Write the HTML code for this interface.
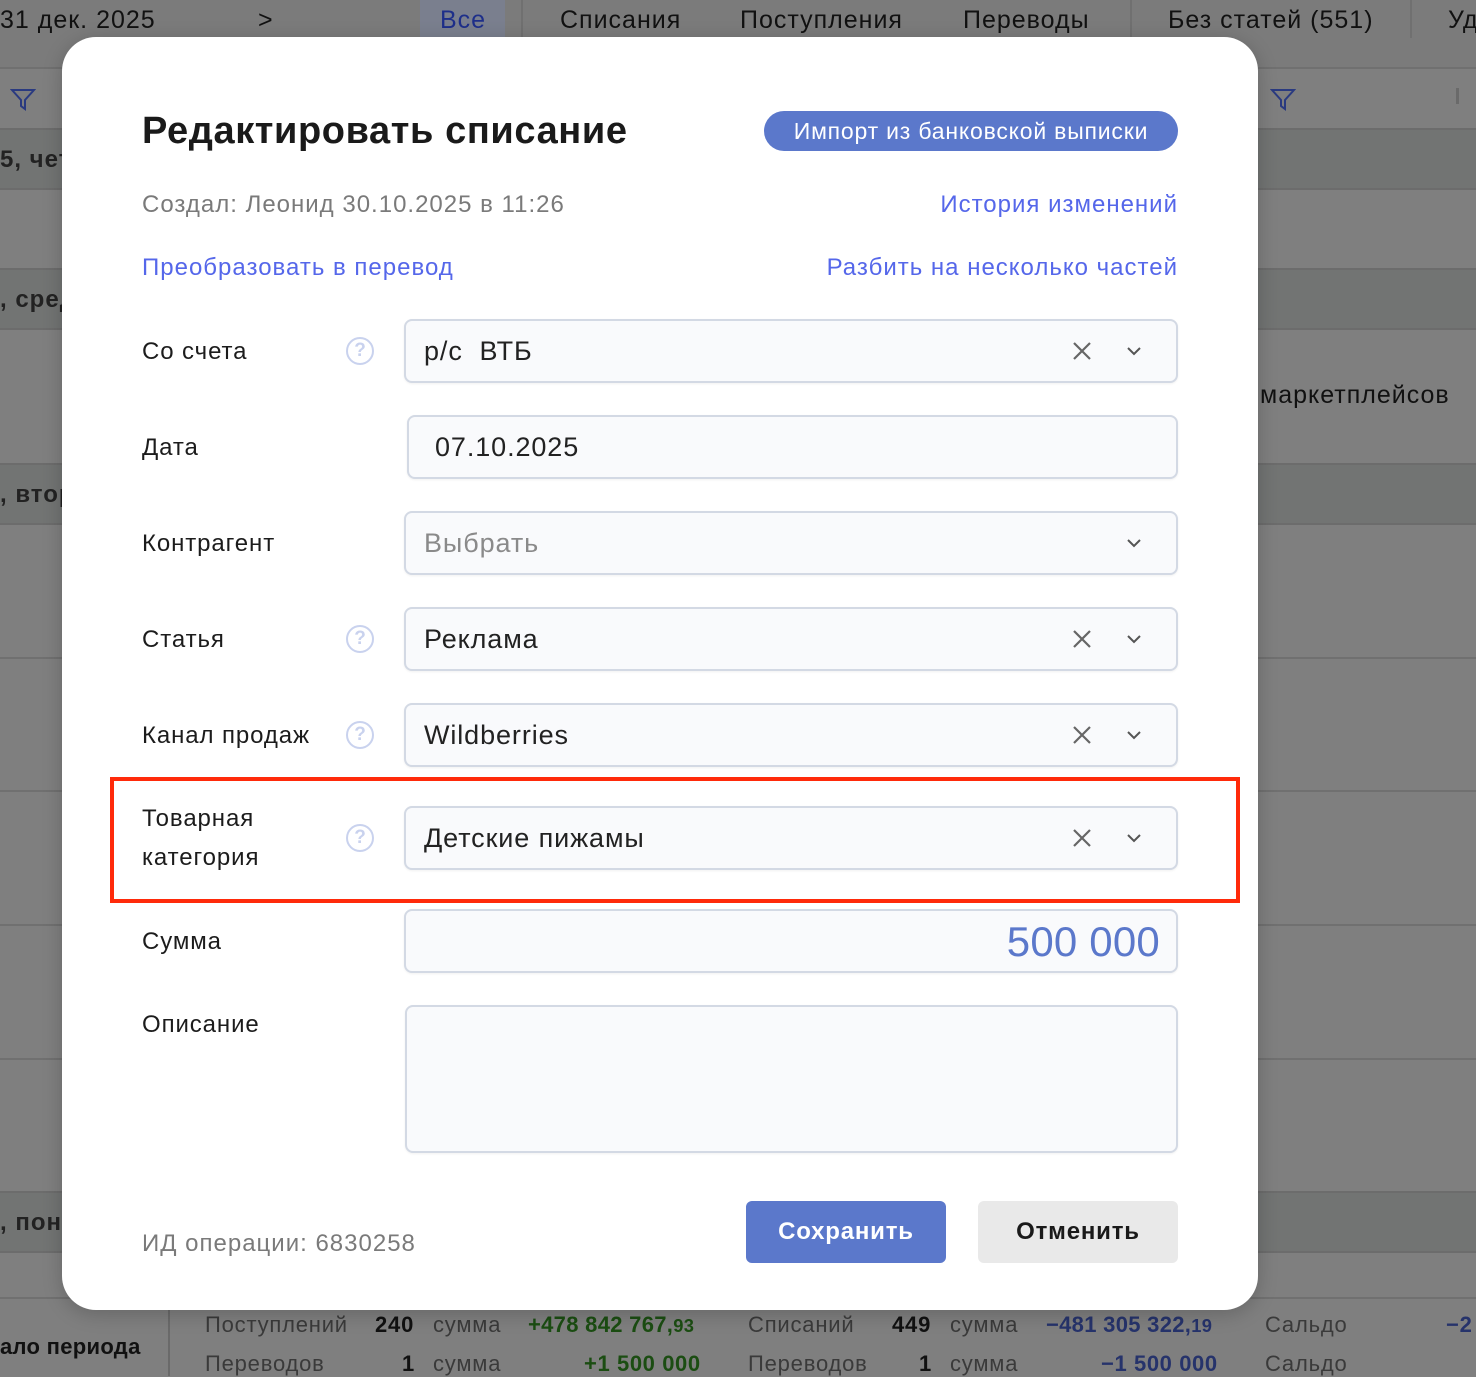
<!DOCTYPE html>
<html><head><meta charset="utf-8"><style>
*{margin:0;padding:0;box-sizing:border-box}
body{width:1476px;height:1376px;overflow:hidden;background:#7f7f7f;font-family:"Liberation Sans","Noto Sans CJK SC",sans-serif;position:relative}
.a{position:absolute;white-space:nowrap}
.band{position:absolute;left:0;width:1476px;background:#727473;border-top:2px solid #6c6c6c;border-bottom:2px solid #6c6c6c}
.ln{position:absolute;left:0;width:1476px;height:2px;background:#707070}
.modal{position:absolute;left:62px;top:37px;width:1196px;height:1273px;background:#fff;border-radius:34px;box-shadow:0 4px 20px rgba(0,0,0,.2)}
.lbl{font-size:24px;color:#1c1c1c;letter-spacing:.9px}
.box{position:absolute;background:#f9fafc;border:2px solid #d3d9e4;border-radius:8px;box-shadow:0 1px 2px rgba(0,0,0,.06)}
.val{position:absolute;left:18px;top:15px;font-size:27px;color:#222;letter-spacing:.9px}
.q{position:absolute;width:28px;height:28px;border:2px solid #c9d2ee;border-radius:50%;color:#c9d2ee;font-size:19px;text-align:center;line-height:24px;font-weight:bold}
.x{position:absolute;right:84px;top:20px}
.ch{position:absolute;right:34px;top:25px}
.link{font-size:24px;color:#5567ea;letter-spacing:1px}
.t{font-size:25px;color:#111;letter-spacing:1px}
.f{font-size:22px;letter-spacing:.8px}
</style></head><body>
<div class="a" style="left:0;top:0;width:1476px;height:68px;background:#7b7b7b"></div>
<div class="a" style="left:420px;top:0;width:85px;height:40px;background:#7a7f8e"></div>
<div class="ln" style="top:67px"></div>
<div class="a t" style="left:0;top:6px">31 дек. 2025</div>
<div class="a t" style="left:258px;top:6px">&gt;</div>
<div class="a t" style="left:440px;top:6px;color:#1e2f8a">Все</div>
<div class="a" style="left:521px;top:0;width:2px;height:38px;background:#707070"></div>
<div class="a t" style="left:560px;top:6px">Списания</div>
<div class="a t" style="left:740px;top:6px">Поступления</div>
<div class="a t" style="left:963px;top:6px">Переводы</div>
<div class="a" style="left:1130px;top:0;width:2px;height:38px;background:#707070"></div>
<div class="a t" style="left:1168px;top:6px">Без статей (551)</div>
<div class="a" style="left:1410px;top:0;width:2px;height:38px;background:#707070"></div>
<div class="a t" style="left:1448px;top:6px">Уд</div>
<svg class="a" style="left:10px;top:88px" width="26" height="24" viewBox="0 0 26 24"><path d="M2 2h22l-9 10v9l-4-3v-6z" fill="none" stroke="#2a3a80" stroke-width="2"/></svg>
<svg class="a" style="left:1270px;top:88px" width="26" height="24" viewBox="0 0 26 24"><path d="M2 2h22l-9 10v9l-4-3v-6z" fill="none" stroke="#2a3a80" stroke-width="2"/></svg>
<div class="a" style="left:1456px;top:88px;width:3px;height:16px;background:#6a6a6a"></div>
<div class="band" style="top:128px;height:62px"></div>
<div class="band" style="top:268px;height:62px"></div>
<div class="band" style="top:463px;height:62px"></div>
<div class="ln" style="top:657px"></div>
<div class="ln" style="top:790px"></div>
<div class="ln" style="top:924px"></div>
<div class="ln" style="top:1058px"></div>
<div class="band" style="top:1191px;height:62px"></div>
<div class="ln" style="top:1297px"></div>
<div class="a" style="left:0;top:146px;font-size:24px;font-weight:bold;color:#222;letter-spacing:1px">5, чет</div>
<div class="a" style="left:0;top:286px;font-size:24px;font-weight:bold;color:#222;letter-spacing:1px">, сред</div>
<div class="a" style="left:0;top:481px;font-size:24px;font-weight:bold;color:#222;letter-spacing:1px">, втор</div>
<div class="a" style="left:0;top:1209px;font-size:24px;font-weight:bold;color:#222;letter-spacing:1px">, поне</div>
<div class="a t" style="left:1260px;top:381px">маркетплейсов</div>
<div class="a" style="left:168px;top:1299px;width:2px;height:77px;background:#6a6a6a"></div>
<div class="a f" style="left:0;top:1334px;font-weight:bold;color:#111;letter-spacing:.3px">ало периода</div>
<div class="a f" style="left:205px;top:1312px;color:#3a3a3a">Поступлений</div>
<div class="a f" style="left:375px;top:1312px;color:#111;font-weight:bold">240</div>
<div class="a f" style="left:433px;top:1312px;color:#3a3a3a">сумма</div>
<div class="a f" style="left:528px;top:1312px;color:#1b4d12;font-weight:bold;letter-spacing:.3px">+478 842 767,<small>93</small></div>
<div class="a f" style="left:748px;top:1312px;color:#3a3a3a">Списаний</div>
<div class="a f" style="left:892px;top:1312px;color:#111;font-weight:bold">449</div>
<div class="a f" style="left:950px;top:1312px;color:#3a3a3a">сумма</div>
<div class="a f" style="left:1046px;top:1312px;color:#26336b;font-weight:bold;letter-spacing:.3px">−481 305 322,<small>19</small></div>
<div class="a f" style="left:1265px;top:1312px;color:#3a3a3a">Сальдо</div>
<div class="a f" style="left:1446px;top:1312px;color:#26336b;font-weight:bold">−2</div>
<div class="a f" style="left:205px;top:1351px;color:#3a3a3a">Переводов</div>
<div class="a f" style="left:402px;top:1351px;color:#111;font-weight:bold">1</div>
<div class="a f" style="left:433px;top:1351px;color:#3a3a3a">сумма</div>
<div class="a f" style="left:584px;top:1351px;color:#1b4d12;font-weight:bold;letter-spacing:.6px">+1 500 000</div>
<div class="a f" style="left:748px;top:1351px;color:#3a3a3a">Переводов</div>
<div class="a f" style="left:919px;top:1351px;color:#111;font-weight:bold">1</div>
<div class="a f" style="left:950px;top:1351px;color:#3a3a3a">сумма</div>
<div class="a f" style="left:1101px;top:1351px;color:#26336b;font-weight:bold;letter-spacing:.6px">−1 500 000</div>
<div class="a f" style="left:1265px;top:1351px;color:#3a3a3a">Сальдо</div>

<div class="modal"></div>
<div class="a" style="left:142px;top:110px;font-size:38px;font-weight:bold;color:#1a1a1a;letter-spacing:.6px">Редактировать списание</div>
<div class="a" style="left:764px;top:111px;width:414px;height:40px;border-radius:20px;background:#5b78cb;color:#fff;font-size:23px;text-align:center;line-height:40px;letter-spacing:.8px">Импорт из банковской выписки</div>
<div class="a" style="left:142px;top:191px;font-size:24px;color:#7a7a7a;letter-spacing:1px">Создал: Леонид 30.10.2025 в 11:26</div>
<div class="a link" style="right:298px;top:191px">История изменений</div>
<div class="a link" style="left:142px;top:254px">Преобразовать в перевод</div>
<div class="a link" style="right:298px;top:254px">Разбить на несколько частей</div>

<div class="a lbl" style="left:142px;top:338px">Со счета</div>
<div class="q" style="left:346px;top:337px">?</div>
<div class="box" style="left:404px;top:319px;width:774px;height:64px"><div class="val">р/с&nbsp; ВТБ</div>
<svg class="x" width="20" height="20"><path d="M2 2l16 16M18 2L2 18" stroke="#666" stroke-width="2.2"/></svg>
<svg class="ch" width="16" height="10"><path d="M2 2l6 6 6-6" stroke="#555" stroke-width="2" fill="none"/></svg></div>

<div class="a lbl" style="left:142px;top:434px">Дата</div>
<div class="box" style="left:407px;top:415px;width:771px;height:64px"><div class="val" style="left:26px">07.10.2025</div></div>

<div class="a lbl" style="left:142px;top:530px">Контрагент</div>
<div class="box" style="left:404px;top:511px;width:774px;height:64px"><div class="val" style="color:#8a8a8a">Выбрать</div>
<svg class="ch" width="16" height="10"><path d="M2 2l6 6 6-6" stroke="#555" stroke-width="2" fill="none"/></svg></div>

<div class="a lbl" style="left:142px;top:626px">Статья</div>
<div class="q" style="left:346px;top:625px">?</div>
<div class="box" style="left:404px;top:607px;width:774px;height:64px"><div class="val">Реклама</div>
<svg class="x" width="20" height="20"><path d="M2 2l16 16M18 2L2 18" stroke="#666" stroke-width="2.2"/></svg>
<svg class="ch" width="16" height="10"><path d="M2 2l6 6 6-6" stroke="#555" stroke-width="2" fill="none"/></svg></div>

<div class="a lbl" style="left:142px;top:722px">Канал продаж</div>
<div class="q" style="left:346px;top:721px">?</div>
<div class="box" style="left:404px;top:703px;width:774px;height:64px"><div class="val">Wildberries</div>
<svg class="x" width="20" height="20"><path d="M2 2l16 16M18 2L2 18" stroke="#666" stroke-width="2.2"/></svg>
<svg class="ch" width="16" height="10"><path d="M2 2l6 6 6-6" stroke="#555" stroke-width="2" fill="none"/></svg></div>

<div class="a" style="left:110px;top:777px;width:1130px;height:126px;border:4px solid #ff2a0a"></div>
<div class="a lbl" style="left:142px;top:799px;line-height:39px">Товарная<br>категория</div>
<div class="q" style="left:346px;top:824px">?</div>
<div class="box" style="left:404px;top:806px;width:774px;height:64px"><div class="val">Детские пижамы</div>
<svg class="x" width="20" height="20"><path d="M2 2l16 16M18 2L2 18" stroke="#666" stroke-width="2.2"/></svg>
<svg class="ch" width="16" height="10"><path d="M2 2l6 6 6-6" stroke="#555" stroke-width="2" fill="none"/></svg></div>

<div class="a lbl" style="left:142px;top:928px">Сумма</div>
<div class="box" style="left:404px;top:909px;width:774px;height:64px"><div class="a" style="right:16px;top:7px;font-size:42px;color:#5b78cb;letter-spacing:.2px">500 000</div></div>

<div class="a lbl" style="left:142px;top:1011px">Описание</div>
<div class="box" style="left:405px;top:1005px;width:773px;height:148px"></div>

<div class="a" style="left:142px;top:1230px;font-size:24px;color:#7a7a7a;letter-spacing:1px">ИД операции: 6830258</div>
<div class="a" style="left:746px;top:1201px;width:200px;height:62px;border-radius:6px;background:#5b78cb;color:#fff;font-size:24px;font-weight:bold;text-align:center;line-height:62px;letter-spacing:.8px">Сохранить</div>
<div class="a" style="left:978px;top:1201px;width:200px;height:62px;border-radius:6px;background:#e9e9e9;color:#1a1a1a;font-size:24px;font-weight:bold;text-align:center;line-height:62px;letter-spacing:.8px">Отменить</div>
</body></html>
